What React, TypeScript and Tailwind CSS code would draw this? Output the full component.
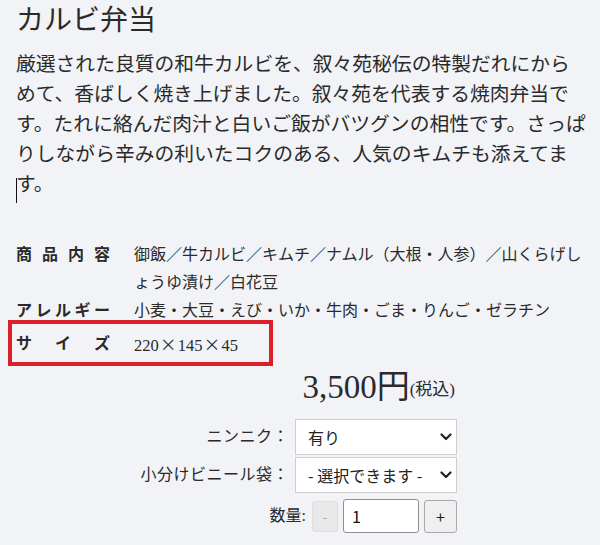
const serif = "font-['Liberation_Serif','Noto_Sans_CJK_JP',serif]"

const Chevron = () => (
  <svg width="12" height="8" viewBox="0 0 12 8" className="absolute right-[5px] top-1/2 -translate-y-1/2 pointer-events-none">
    <path d="M1.5 1.5 L6 6 L10.5 1.5" fill="none" stroke="#222" strokeWidth="2.2" strokeLinecap="round" strokeLinejoin="round" />
  </svg>
)

const SpreadLabel = ({ chars }: { chars: string[] }) => (
  <div className="w-[94px] shrink-0 flex justify-between font-bold">
    {chars.map((c, i) => (
      <span key={i}>{c}</span>
    ))}
  </div>
)

const SelectBox = ({ value, options }: { value: string; options: string[] }) => (
  <div className="relative w-[162px] h-[36px]">
    <select
      defaultValue={value}
      className="appearance-none w-full h-full bg-white border border-[#cfcfcf] pl-[12px] pr-6 text-[16px] text-[#222] font-['Noto_Sans_CJK_JP',sans-serif] outline-none"
    >
      {options.map((o) => (
        <option key={o}>{o}</option>
      ))}
    </select>
    <Chevron />
  </div>
)

const Times = () => <span className="font-['Noto_Sans_CJK_JP',sans-serif] inline-block w-[19px] text-center">×</span>

export default function App() {
  return (
    <div className={`${serif} bg-[#f2f3f7] text-[#2a2a2a] min-h-[545px] w-[600px] pl-4 pt-[3px]`}>
      <h1 className="text-[28px] leading-[36px] font-normal">カルビ弁当</h1>

      <p className="mt-[10px] text-[19.8px] leading-[30px] whitespace-nowrap">
        厳選された良質の和牛カルビを、叙々苑秘伝の特製だれにから
        <br />
        めて、香ばしく焼き上げました。叙々苑を代表する焼肉弁当で
        <br />
        す。たれに絡んだ肉汁と白いご飯がバツグンの相性です。さっぱ
        <br />
        りしながら辛みの利いたコクのある、人気のキムチも添えてま
        <br />
        <span className="relative">
          <span className="absolute left-0 top-[5px] w-px h-[25px] bg-[#111]"></span>
        </span>
        す。
      </p>

      <div className="mt-[42px] text-[16px] leading-[28px]">
        <div className="flex gap-[24px]">
          <SpreadLabel chars={["商", "品", "内", "容"]} />
          <div className="whitespace-nowrap">
            御飯／牛カルビ／キムチ／ナムル（大根・人参）／山くらげし
            <br />
            ょうゆ漬け／白花豆
          </div>
        </div>
        <div className="flex gap-[24px]">
          <SpreadLabel chars={["ア", "レ", "ル", "ギ", "ー"]} />
          <div className="whitespace-nowrap">小麦・大豆・えび・いか・牛肉・ごま・りんご・ゼラチン</div>
        </div>
        <div className="relative flex gap-[24px] mt-[5px]">
          <SpreadLabel chars={["サ", "イ", "ズ"]} />
          <div className="whitespace-nowrap text-[16.5px]">
            220<Times />145<Times />45
          </div>
          <div className="absolute -left-[8px] -top-[10px] w-[265px] h-[46px] border-[4px] border-[#d9202b]"></div>
        </div>
      </div>

      <div className="w-[441px] flex flex-col items-end">
        <div className="mt-[7px] h-[40px] flex items-end pr-[2px]">
          <span className="text-[33px] leading-[40px]">3,500円</span>
          <span className="text-[17px] leading-[30px] mb-[2px]">(税込)</span>
        </div>

        <div className="mt-[12px] flex items-center gap-[6px]">
          <span className="text-[16px] tracking-[0.5px]">ニンニク：</span>
          <SelectBox value="有り" options={["有り", "無し"]} />
        </div>
        <div className="mt-[2px] flex items-center gap-[6px]">
          <span className="text-[16px] tracking-[0.5px]">小分けビニール袋：</span>
          <SelectBox value="- 選択できます -" options={["- 選択できます -", "必要", "不要"]} />
        </div>

        <div className="mt-[6px] flex items-center gap-[5px]">
          <span className="text-[16px] mr-[1px]">数量:</span>
          <button
            disabled
            className="w-[26px] h-[31px] bg-[#e8e8e9] border border-[#dedede] rounded-[3px] text-[#b0b0b0] text-[14px] font-['Noto_Sans_CJK_JP',sans-serif]"
          >
            -
          </button>
          <input
            defaultValue="1"
            className="w-[76px] h-[34px] bg-white border border-[#8f8f8f] rounded-[3px] pl-[8px] text-[16px] text-[#111] font-['Noto_Sans_CJK_JP',sans-serif] outline-none"
          />
          <button className="w-[33px] h-[33px] bg-[#efefef] border border-[#a9a9a9] rounded-[3px] text-[16px] text-[#222] font-['Noto_Sans_CJK_JP',sans-serif]">
            +
          </button>
        </div>
      </div>
    </div>
  )
}
